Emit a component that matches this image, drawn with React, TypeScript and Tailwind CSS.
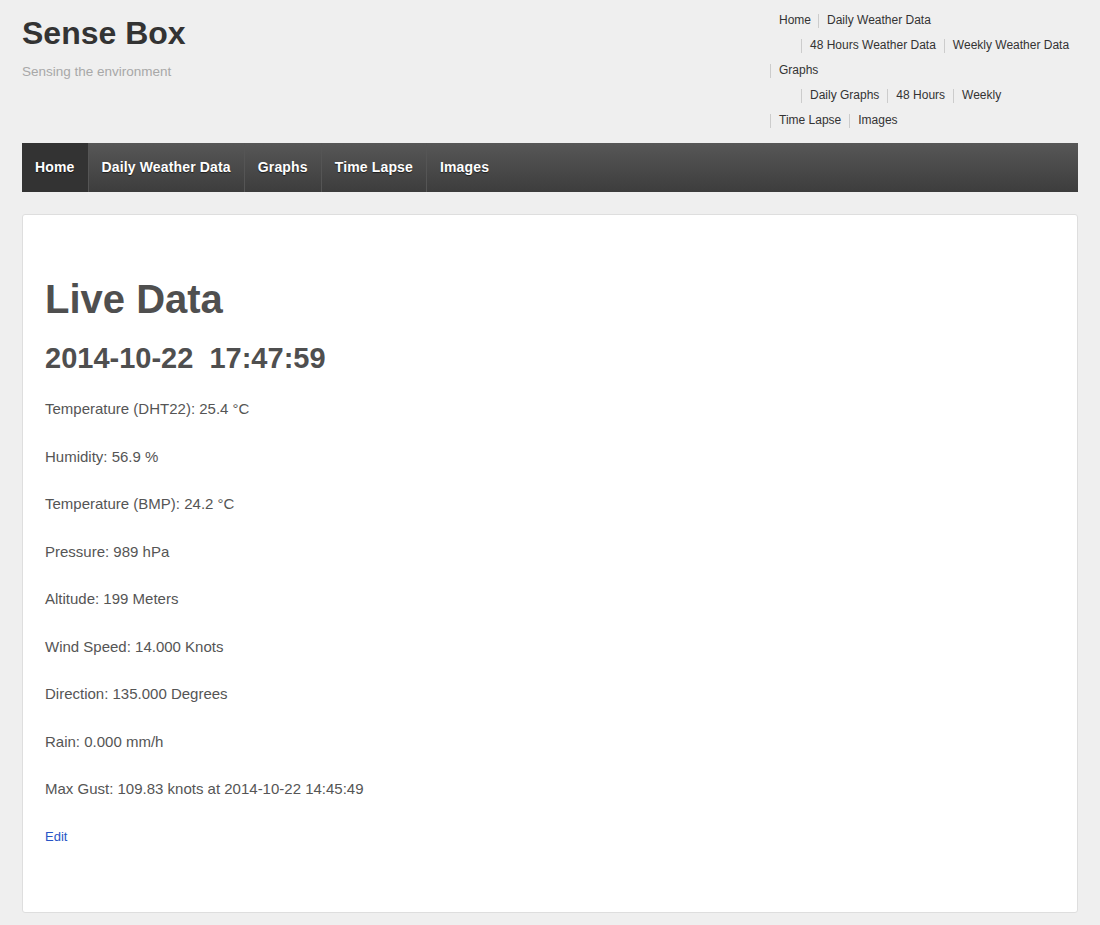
import React from "react";

const font = { fontFamily: '"Liberation Sans", Arial, sans-serif' };

type Item = { label: string; sep?: boolean };

// top-right link list, laid out row by row like the wrapped menu
const menuRows: { indent: string; items: Item[] }[] = [
  { indent: "pl-[9px]", items: [{ label: "Home" }, { label: "Daily Weather Data", sep: true }] },
  { indent: "pl-[31px]", items: [{ label: "48 Hours Weather Data", sep: true }, { label: "Weekly Weather Data", sep: true }] },
  { indent: "pl-0", items: [{ label: "Graphs", sep: true }] },
  { indent: "pl-[31px]", items: [{ label: "Daily Graphs", sep: true }, { label: "48 Hours", sep: true }, { label: "Weekly", sep: true }] },
  { indent: "pl-0", items: [{ label: "Time Lapse", sep: true }, { label: "Images", sep: true }] },
];

const navItems = ["Home", "Daily Weather Data", "Graphs", "Time Lapse", "Images"];

const readings = [
  "Temperature (DHT22): 25.4 °C",
  "Humidity: 56.9 %",
  "Temperature (BMP): 24.2 °C",
  "Pressure: 989 hPa",
  "Altitude: 199 Meters",
  "Wind Speed: 14.000 Knots",
  "Direction: 135.000 Degrees",
  "Rain: 0.000 mm/h",
  "Max Gust: 109.83 knots at 2014-10-22 14:45:49",
];

export default function App() {
  return (
    <div className="min-h-[925px] bg-[#efefef] px-[22px]" style={font}>
      {/* Header */}
      <header className="flex justify-between">
        <div className="pt-[13px]">
          <h1 className="text-[32px] font-bold leading-[40px] text-[#333]">Sense Box</h1>
          <p className="mt-[11px] text-[13.5px] leading-[16px] text-[#a8a8a8]">Sensing the environment</p>
        </div>
        <ul className="w-[308px] pt-[8px] text-[12px] leading-[25px] text-[#333]">
          {menuRows.map((row, i) => (
            <li key={i} className={`flex ${row.indent}`}>
              {row.items.map((it) => (
                <span key={it.label} className="flex items-center">
                  {it.sep && <span className="h-[14px] w-px bg-[#ccc]" />}
                  <span className={it.sep ? "px-[8px]" : "pl-0 pr-[7px]"}>{it.label}</span>
                </span>
              ))}
            </li>
          ))}
        </ul>
      </header>

      {/* Nav bar */}
      <nav className="mt-[10px] flex h-[49px] bg-gradient-to-b from-[#575757] to-[#3d3d3d]">
        {navItems.map((n, i) => (
          <a
            key={n}
            className={`flex items-center px-[13px] text-[14px] font-bold tracking-[0.15px] text-white ${
              i === 0 ? "bg-[#333]" : ""
            } ${i < navItems.length - 1 ? "border-r border-[#555]" : ""}`}
            style={{ textShadow: "0 1px 1px rgba(0,0,0,0.6)" }}
          >
            {n}
          </a>
        ))}
      </nav>

      {/* Content card */}
      <main className="mt-[22px] h-[699px] rounded-[3px] border border-[#dedede] bg-white px-[22px] pt-[60px] text-[#555]">
        <h2 className="text-[40px] font-bold leading-[48px] text-[#4f4f4f]">Live Data</h2>
        <h3 className="mt-[17px] text-[29px] font-bold leading-[36px] text-[#4f4f4f]">2014-10-22&nbsp; 17:47:59</h3>
        <div className="mt-[21px]">
          {readings.map((r) => (
            <p key={r} className="mb-[24px] text-[15px] leading-[23.5px]">
              {r}
            </p>
          ))}
        </div>
        <a className="mt-[28px] block text-[13px] leading-[16px] text-[#2755c6]">Edit</a>
      </main>
    </div>
  );
}
